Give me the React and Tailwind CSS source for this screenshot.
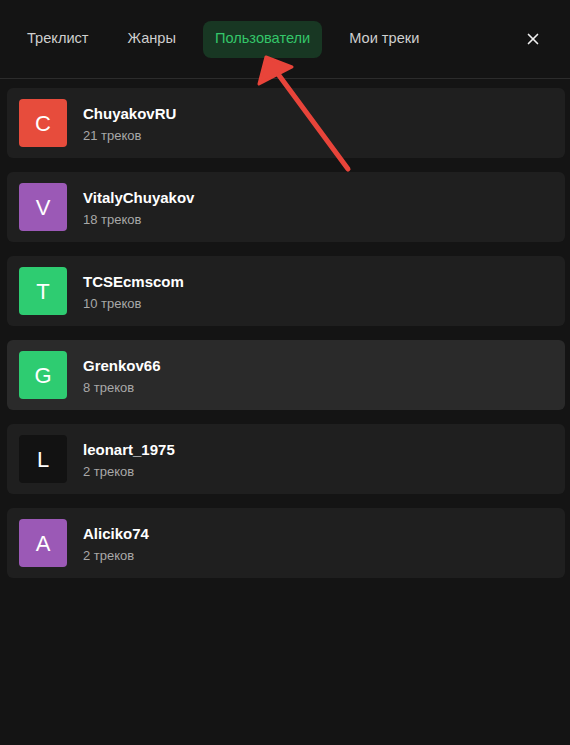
import { X } from "lucide-react";

const tabs = ["Треклист", "Жанры", "Пользователи", "Мои треки"];

const users = [
  { name: "ChuyakovRU", tracks: 21, color: "bg-[#e74c3c]" },
  { name: "VitalyChuyakov", tracks: 18, color: "bg-[#9b59b6]" },
  { name: "TCSEcmscom", tracks: 10, color: "bg-[#2ecc71]" },
  { name: "Grenkov66", tracks: 8, color: "bg-[#2ecc71]", hover: true },
  { name: "leonart_1975", tracks: 2, color: "bg-[#121212]" },
  { name: "Aliciko74", tracks: 2, color: "bg-[#9b59b6]" },
];

export default function App() {
  return (
    <div
      className="relative min-h-[745px] w-full bg-[#141414] text-white"
      style={{ fontFamily: '"Liberation Sans", Arial, sans-serif' }}
    >
      <header className="flex h-[79px] items-center border-b border-[#2c2c2c] pl-[15px] pr-[28px]">
        <nav className="flex items-center gap-[15px]">
          {tabs.map((t) => (
            <button
              key={t}
              className={`flex h-[37px] items-center rounded-lg px-3 text-[14.6px] ${
                t === "Пользователи"
                  ? "bg-[#183723] text-[#34c66a]"
                  : "text-[#cfcfcf]"
              }`}
            >
              {t}
            </button>
          ))}
        </nav>
        <button className="ml-auto text-[#f0f0f0]">
          <X size={18} strokeWidth={2.2} />
        </button>
      </header>

      <main className="flex flex-col gap-[14px] pl-[7px] pr-[5px] pt-[9px]">
        {users.map((u) => (
          <div
            key={u.name}
            className={`flex h-[70px] items-center gap-4 rounded-md px-3 ${
              u.hover ? "bg-[#2a2a2a]" : "bg-[#1f1f1f]"
            }`}
          >
            <div
              className={`flex h-12 w-12 shrink-0 items-center justify-center rounded text-[22px] text-white ${u.color}`}
            >
              {u.name[0].toUpperCase()}
            </div>
            <div className="flex flex-col gap-[8px] pt-[1px]">
              <span className="text-[15px] font-bold leading-none">{u.name}</span>
              <span className="text-[13px] leading-none text-[#a8a8a8]">
                {u.tracks} треков
              </span>
            </div>
          </div>
        ))}
      </main>

      {/* annotation arrow */}
      <svg
        className="pointer-events-none absolute left-0 top-0"
        width="570"
        height="200"
        viewBox="0 0 570 200"
      >
        <line
          x1="348"
          y1="169"
          x2="278"
          y2="74"
          stroke="#e8443a"
          strokeWidth="5"
          strokeLinecap="round"
        />
        <polygon
          points="266,57 292,67 259,84"
          fill="#e8443a"
          stroke="#e8443a"
          strokeWidth="3"
          strokeLinejoin="round"
        />
      </svg>
    </div>
  );
}
